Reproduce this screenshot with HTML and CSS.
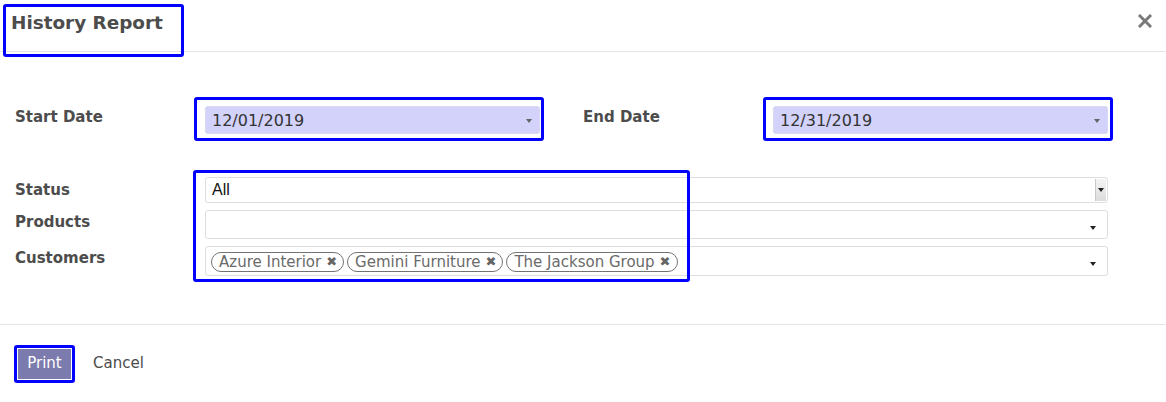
FILE: index.html
```html
<!DOCTYPE html>
<html>
<head>
<meta charset="utf-8">
<link rel="stylesheet" href="styles.css">
</head>
<body>
<div class="dialog">
  <div class="header">
    <h4 class="title hl hl-title">History Report</h4>
    <button class="close" aria-label="Close">
      <svg width="14" height="14" viewBox="0 0 14 14"><path d="M2 2 L12 12 M12 2 L2 12" stroke="#7a7a7a" stroke-width="3" stroke-linecap="square"/></svg>
    </button>
  </div>
  <div class="body">
    <div class="date-row">
      <label class="lbl">Start Date</label>
      <div class="field date hl hl-start">12/01/2019<span class="caret grey"></span></div>
      <span></span>
      <label class="lbl">End Date</label>
      <div class="field date hl hl-end">12/31/2019<span class="caret grey"></span></div>
    </div>
    <div class="group">
      <div class="labels">
        <label class="lbl l-status">Status</label>
        <label class="lbl l-products">Products</label>
        <label class="lbl l-customers">Customers</label>
      </div>
      <div class="fields">
        <div class="group-box"></div>
        <div class="field select">All<span class="native-arrow"><span class="caret dark"></span></span></div>
        <div class="field many products"><span class="caret dark"></span></div>
        <div class="field many customers">
          <span class="tag">Azure Interior <span class="x">✖</span></span>
          <span class="tag">Gemini Furniture <span class="x">✖</span></span>
          <span class="tag">The Jackson Group <span class="x">✖</span></span>
          <span class="caret dark"></span>
        </div>
      </div>
    </div>
  </div>
  <div class="footer">
    <button class="btn-print hl hl-print">Print</button>
    <button class="btn-cancel">Cancel</button>
  </div>
</div>
</body>
</html>
```

FILE: styles.css
```css
* { box-sizing: border-box; }
html, body { margin: 0; padding: 0; background: #fff; }
body {
  font-family: "DejaVu Sans", Verdana, sans-serif;
  color: #4c4c4c;
  width: 1166px;
  height: 402px;
  overflow: hidden;
}
.dialog { display: flex; flex-direction: column; }

.hl { position: relative; }
.hl::after {
  content: "";
  position: absolute;
  border: 3px solid #0000ff;
  border-radius: 3px;
  pointer-events: none;
}

.header {
  height: 52px;
  border-bottom: 1px solid #e6e6e6;
  display: flex;
  justify-content: space-between;
  align-items: flex-start;
  padding: 11px 13px 0 11px;
}
.title {
  margin: 0;
  font-size: 18.4px;
  font-weight: bold;
  line-height: 24px;
  color: #4c4c4c;
}
.hl-title::after { top: -7px; left: -8px; width: 175px; height: 47px; }
.close {
  border: 0;
  background: none;
  padding: 0;
  margin-top: 3px;
  width: 16px;
  height: 16px;
  cursor: pointer;
}

.body { padding: 54px 15px 0 15px; }
.date-row {
  display: grid;
  grid-template-columns: 190px 335px 43px 190px 335px;
  align-items: center;
}
.lbl {
  font-weight: bold;
  font-size: 15px;
  color: #4c4c4c;
}
.date-row .lbl { align-self: start; margin-top: 2px; }
.field {
  border: 1px solid #dedede;
  border-radius: 3px;
  display: flex;
  align-items: center;
  position: relative;
}
.date {
  height: 28px;
  background: #d2d2fa;
  border-color: #d8d8ee;
  padding-left: 6px;
  font-size: 16px;
  color: #333;
}
.hl-start::after { top: -10px; left: -12px; right: -5px; bottom: -8px; }
.hl-end::after { top: -10px; left: -11px; right: -6px; bottom: -8px; }

.caret {
  position: absolute;
  width: 0; height: 0;
  border-left: 3.5px solid transparent;
  border-right: 3.5px solid transparent;
  border-top: 4px solid #666;
}
.caret.grey { right: 7px; top: 12px; border-top-color: #666; }
.caret.dark { border-top-color: #222; right: 11px; top: 15px; }

.group {
  display: flex;
  margin-top: 43px;
}
.labels {
  width: 190px;
  display: flex;
  flex-direction: column;
}
.l-status { margin-top: 3px; line-height: 20px; }
.l-products { margin-top: 12px; line-height: 20px; }
.l-customers { margin-top: 16px; line-height: 20px; }
.fields {
  width: 903px;
  display: flex;
  flex-direction: column;
  gap: 7px;
  position: relative;
}
.group-box {
  position: absolute;
  top: -7px;
  left: -12px;
  width: 497px;
  height: 112px;
  border: 3px solid #0000ff;
  border-radius: 3px;
  pointer-events: none;
  z-index: 2;
}
.select {
  height: 26px;
  padding-left: 6px;
  font-family: "Liberation Sans", Arial, sans-serif;
  font-size: 16px;
  color: #111;
}
.native-arrow {
  position: absolute;
  right: 1px;
  top: 1px;
  bottom: 1px;
  width: 11px;
  background: linear-gradient(#f4f4f4, #dcdcdc);
  border-left: 1px solid #c8c8c8;
}
.native-arrow .caret { right: 2px; top: 9px; border-left-width: 3px; border-right-width: 3px; }
.products { height: 29px; }
.customers {
  height: 30px;
  padding-left: 5px;
  padding-top: 1px;
  gap: 3px;
}
.tag {
  display: inline-flex;
  align-items: center;
  height: 20px;
  border: 1.5px solid #737373;
  border-radius: 10px;
  padding: 0 6px 0 7px;
  font-size: 15px;
  color: #6a6a6a;
  white-space: nowrap;
}
.tag .x { font-size: 13px; margin-left: 5px; color: #666; }

.footer {
  margin-top: 48px;
  border-top: 1px solid #e6e6e6;
  padding: 24px 0 0 18px;
  display: flex;
  align-items: center;
}
.btn-print {
  font-family: "DejaVu Sans", Verdana, sans-serif;
  height: 30px;
  width: 53px;
  background: #7c7bad;
  color: #fff;
  border: 0;
  font-size: 15px;
  padding: 0 0 2px 0;
}
.hl-print::after { top: -4px; left: -4px; right: -4px; bottom: -4px; }
.btn-cancel {
  font-family: "DejaVu Sans", Verdana, sans-serif;
  background: none;
  border: 0;
  padding: 0 0 2px 0;
  margin-left: 22px;
  font-size: 15px;
  color: #4c4c4c;
}
```
